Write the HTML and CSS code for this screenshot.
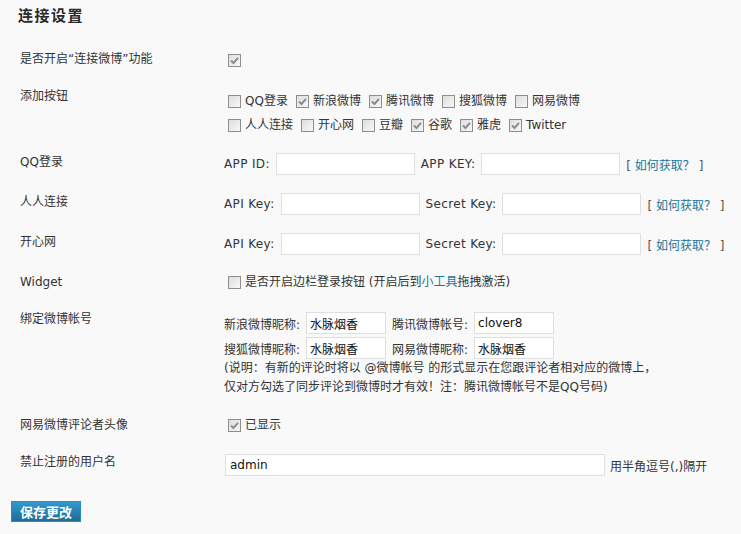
FILE: index.html
```html
<!DOCTYPE html>
<html lang="zh-CN">
<head>
<meta charset="utf-8">
<title>连接设置</title>
<link rel="stylesheet" href="styles.css">
</head>
<body>
<div class="wrap">
  <h2 class="title">连接设置</h2>

  <div class="row r-a">
    <div class="th">是否开启“连接微博”功能</div>
    <div class="td td-line td-p1"><span class="cb on"><svg viewBox="0 0 11 11" width="11" height="11"><path d="M2 5.5 L4.5 8 L9 2.8" fill="none" stroke="#8c8c8c" stroke-width="2"/></svg></span></div>
  </div>

  <div class="row r-b">
    <div class="th">添加按钮</div>
    <div class="td td-opts">
      <div class="optline">
        <label class="opt"><span class="cb"></span>QQ登录</label>
        <label class="opt"><span class="cb on"><svg viewBox="0 0 11 11" width="11" height="11"><path d="M2 5.5 L4.5 8 L9 2.8" fill="none" stroke="#8c8c8c" stroke-width="2"/></svg></span>新浪微博</label>
        <label class="opt"><span class="cb on"><svg viewBox="0 0 11 11" width="11" height="11"><path d="M2 5.5 L4.5 8 L9 2.8" fill="none" stroke="#8c8c8c" stroke-width="2"/></svg></span>腾讯微博</label>
        <label class="opt"><span class="cb"></span>搜狐微博</label>
        <label class="opt"><span class="cb"></span>网易微博</label>
      </div>
      <div class="optline">
        <label class="opt"><span class="cb"></span>人人连接</label>
        <label class="opt"><span class="cb"></span>开心网</label>
        <label class="opt"><span class="cb"></span>豆瓣</label>
        <label class="opt"><span class="cb on"><svg viewBox="0 0 11 11" width="11" height="11"><path d="M2 5.5 L4.5 8 L9 2.8" fill="none" stroke="#8c8c8c" stroke-width="2"/></svg></span>谷歌</label>
        <label class="opt"><span class="cb on"><svg viewBox="0 0 11 11" width="11" height="11"><path d="M2 5.5 L4.5 8 L9 2.8" fill="none" stroke="#8c8c8c" stroke-width="2"/></svg></span>雅虎</label>
        <label class="opt"><span class="cb on"><svg viewBox="0 0 11 11" width="11" height="11"><path d="M2 5.5 L4.5 8 L9 2.8" fill="none" stroke="#8c8c8c" stroke-width="2"/></svg></span>Twitter</label>
      </div>
    </div>
  </div>

  <div class="row r-c">
    <div class="th th-p1">QQ登录</div>
    <div class="td td-fields">
      <span class="flabel lat">APP ID:</span><input class="inp w139" type="text">
      <span class="flabel lat">APP KEY:</span><input class="inp w139" type="text">
      <span class="help">[ <a href="#">如何获取？</a> ]</span>
    </div>
  </div>

  <div class="row r-d">
    <div class="th th-p1">人人连接</div>
    <div class="td td-fields">
      <span class="flabel lat">API Key:</span><input class="inp w139" type="text">
      <span class="flabel lat">Secret Key:</span><input class="inp w139" type="text">
      <span class="help">[ <a href="#">如何获取？</a> ]</span>
    </div>
  </div>

  <div class="row r-d">
    <div class="th th-p1">开心网</div>
    <div class="td td-fields">
      <span class="flabel lat">API Key:</span><input class="inp w139" type="text">
      <span class="flabel lat">Secret Key:</span><input class="inp w139" type="text">
      <span class="help">[ <a href="#">如何获取？</a> ]</span>
    </div>
  </div>

  <div class="row r-d">
    <div class="th th-p1">Widget</div>
    <div class="td td-line td-p1">
      <label class="opt"><span class="cb"></span>是否开启边栏登录按钮 (开启后到<a href="#">小工具</a>拖拽激活)</label>
    </div>
  </div>

  <div class="row r-g">
    <div class="th">绑定微博帐号</div>
    <div class="td td-bind">
      <div class="bindline">
        <span class="flabel">新浪微博昵称:</span><input class="inp w80 val" type="text" value="水脉烟香">
        <span class="flabel">腾讯微博帐号:</span><input class="inp w80 val" type="text" value="clover8">
      </div>
      <div class="bindline">
        <span class="flabel">搜狐微博昵称:</span><input class="inp w80 val" type="text" value="水脉烟香">
        <span class="flabel">网易微博昵称:</span><input class="inp w80 val" type="text" value="水脉烟香">
      </div>
      <p class="note">(说明：有新的评论时将以 @微博帐号 的形式显示在您跟评论者相对应的微博上，<br>仅对方勾选了同步评论到微博时才有效！注：腾讯微博帐号不是QQ号码)</p>
    </div>
  </div>

  <div class="row r-h">
    <div class="th">网易微博评论者头像</div>
    <div class="td td-line">
      <label class="opt"><span class="cb on"><svg viewBox="0 0 11 11" width="11" height="11"><path d="M2 5.5 L4.5 8 L9 2.8" fill="none" stroke="#8c8c8c" stroke-width="2"/></svg></span>已显示</label>
    </div>
  </div>

  <div class="row r-i">
    <div class="th">禁止注册的用户名</div>
    <div class="td td-fields">
      <input class="inp wide val" type="text" value="admin"><span class="hint">用半角逗号(,)隔开</span>
    </div>
  </div>

  <div class="submit">
    <button class="btn" type="button">保存更改</button>
  </div>
</div>
</body>
</html>
```

FILE: styles.css
```css
html, body {
  margin: 0;
  padding: 0;
  background: #f9f9f9;
}

body {
  font-family: "DejaVu Sans", "Noto Sans CJK SC", sans-serif;
  font-size: 12px;
  color: #333;
}

.wrap {
  width: 741px;
  height: 534px;
  overflow: hidden;
}

.title {
  margin: 0;
  padding: 7px 0 0 18px;
  font-size: 15px;
  line-height: 18px;
  font-weight: bold;
  letter-spacing: 1.5px;
  color: #2a2a2a;
}

.row {
  display: flex;
  align-items: flex-start;
}

.r-a { margin-top: 26px; }
.r-b { margin-top: 20px; }
.r-c { margin-top: 16px; }
.r-d { margin-top: 18px; }
.r-g { margin-top: 21px; }
.r-h { margin-top: 20px; }
.r-i { margin-top: 21px; }

.th {
  width: 224px;
  flex-shrink: 0;
  box-sizing: border-box;
  padding-left: 20px;
  line-height: 16px;
}

.th-p1 { padding-top: 1px; }

.td {
  flex: 1;
  min-width: 0;
}

.td-line {
  line-height: 16px;
  height: 16px;
  display: flex;
  align-items: center;
}

.td-p1 { padding-top: 1px; }

.td-opts { padding-top: 1px; }

.optline {
  display: flex;
  align-items: center;
  height: 24px;
  line-height: 24px;
}

.opt {
  display: inline-flex;
  align-items: center;
  margin-right: 4px;
  white-space: nowrap;
}

.cb {
  display: inline-flex;
  align-items: center;
  justify-content: center;
  width: 13px;
  height: 13px;
  box-sizing: border-box;
  border: 1px solid #8e8e8e;
  background: linear-gradient(135deg, #dedede, #f7f7f7);
  margin: 0 4px 0 4px;
  flex-shrink: 0;
}

.cb svg {
  display: block;
}

.td-fields {
  display: flex;
  align-items: center;
  height: 22px;
  white-space: nowrap;
}

.flabel {
  margin-right: 6px;
}

.lat {
  letter-spacing: 0.35px;
}

.inp {
  box-sizing: border-box;
  height: 22px;
  border: 1px solid #dfdfdf;
  background: #fff;
  margin: 0 6px 0 0;
  padding: 0 4px;
  font-family: "DejaVu Sans", "Noto Sans CJK SC", sans-serif;
  font-size: 12px;
  color: #111;
  outline: none;
}

.w139 { width: 139px; }
.w80 { width: 80px; padding: 0 3px; }
.wide { width: 380px; margin-left: 1px; margin-right: 5px; }

.help {
  color: #555;
}

a {
  color: #21759b;
  text-decoration: none;
}

.td-bind {
  padding-top: 1px;
}

.bindline {
  display: flex;
  align-items: center;
  height: 22px;
  white-space: nowrap;
}

.bindline + .bindline {
  margin-top: 3px;
}

.note {
  margin: 0;
  line-height: 19px;
}

.hint {
  white-space: nowrap;
}

.submit {
  margin-top: 25px;
  padding-left: 11px;
}

.btn {
  display: block;
  height: 21px;
  padding: 0 8px;
  border: 1px solid #2b8cbd;
  background: linear-gradient(to bottom, #3399cc, #1f6b97);
  color: #fff;
  font-family: "Noto Sans CJK SC", sans-serif;
  font-size: 13px;
  font-weight: bold;
  line-height: 19px;
  cursor: pointer;
}
```
